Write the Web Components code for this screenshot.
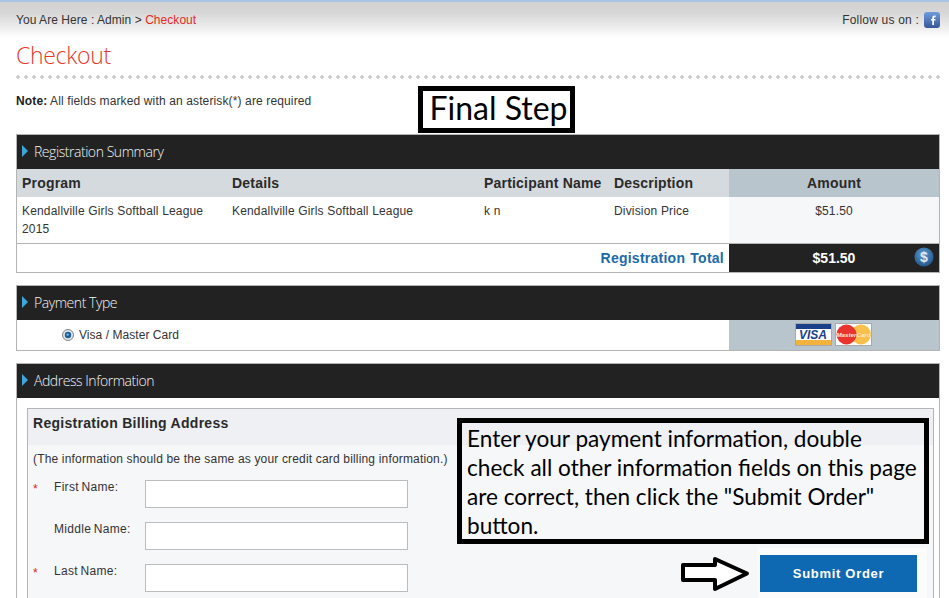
<!DOCTYPE html>
<html lang="en">
<head>
<meta charset="utf-8">
<title>Checkout</title>
<style>
  html, body { margin: 0; padding: 0; height: 598px; overflow: hidden; background: #fff; }
  body { font: 12px/18px "Liberation Sans", Arial, sans-serif; color: #333; }
</style>
</head>
<body>
<checkout-page>
  <crumb-bar></crumb-bar>
  <page-title>Checkout</page-title>
  <note-row></note-row>

  <section-panel heading="Registration Summary">
    <summary-table></summary-table>
  </section-panel>

  <section-panel heading="Payment Type">
    <payment-type></payment-type>
  </section-panel>

  <section-panel heading="Address Information">
    <billing-form></billing-form>
  </section-panel>

  <note-box style="left:418px;top:86px;width:157px;height:47px;font-size:32px;line-height:33px;text-align:center;padding-left:4px;background:#fff">Final Step</note-box>
  <note-box style="left:457px;top:418px;width:472px;height:126px;font-size:22.6px;line-height:29px;padding:1px 0 0 5px">Enter your payment information, double check all other information fields on this page are correct, then click the "Submit Order" button.</note-box>
  <hint-arrow></hint-arrow>
</checkout-page>

<script>
function define(name, html, init) {
  customElements.define(name, class extends HTMLElement {
    constructor() {
      super();
      this.attachShadow({ mode: "open" });
    }
    connectedCallback() {
      this.shadowRoot.innerHTML = html;
      if (init) init(this);
    }
  });
}

define("checkout-page", /* html */`
<style>
  :host { display: block; position: relative; height: 598px; overflow: hidden; }
</style>
<slot></slot>`);

define("crumb-bar", /* html */`
<style>
  :host {
    display: flex; justify-content: space-between; align-items: center;
    height: 35px; padding: 0 9px 0 16px;
    border-top: 2px solid #a9c5e3;
    background: linear-gradient(#d2d2d2 0, #d6d6d6 30%, #eee 75%, #fff 100%);
  }
  .crumb { margin-top: 1px; letter-spacing: .05px; }
  .here { color: #e8281e; }
  .follow { display: flex; align-items: center; gap: 5px; margin-top: 1px; letter-spacing: .2px; }
  svg { display: block; }
</style>
<span class="crumb">You Are Here : Admin &gt; <span class="here">Checkout</span></span>
<span class="follow">Follow us on :
  <svg width="16" height="16" viewBox="0 0 16 16">
    <defs><linearGradient id="fb" x1="0" y1="0" x2="0" y2="1"><stop offset="0" stop-color="#6f9bdc"/><stop offset="1" stop-color="#37579b"/></linearGradient></defs>
    <rect width="16" height="16" rx="3" fill="url(#fb)"/>
    <path d="M8.3 13V8.6H7V7h1.3V5.9C8.3 4.4 9.1 3.6 10.5 3.6h1.1v1.6h-.8c-.6 0-.8.3-.8.8V7h1.6l-.2 1.6h-1.4V13z" fill="#fff"/>
  </svg>
</span>`);

define("page-title", /* html */`
<style>
  :host {
    display: block; height: 42px; margin: 0 9px 0 16px;
    font: 300 23px/37px "Open Sans", sans-serif; color: #e8392c; letter-spacing: -.3px;
    background: radial-gradient(circle at 2px 2px, #cbcbcb 1.5px, transparent 2px) left bottom / 8px 4px repeat-x;
  }
</style>
<slot></slot>`);

define("note-row", /* html */`
<style>
  :host { display: block; height: 55px; padding-top: 13px; box-sizing: border-box; }
  div { padding-left: 16px; letter-spacing: .13px; }
  b { color: #222; }
</style>
<div><b>Note:</b> All fields marked with an asterisk(*) are required</div>`);

define("section-panel", /* html */`
<style>
  :host { display: block; margin: 0 9px 12px 16px; border: 1px solid #b4b4b4; }
  header {
    display: flex; align-items: center; gap: 6px; height: 34px; padding-left: 5px;
    background: #222; color: #f4f4f4;
    font: 300 14px/34px "Open Sans", sans-serif; letter-spacing: -.45px;
  }
  i { width: 0; height: 0; border-left: 6px solid #3fa6dc; border-top: 6px solid transparent; border-bottom: 6px solid transparent; margin-top: -2px; }
</style>
<header><i></i><span id="t"></span></header>
<slot></slot>`, (el) => {
  el.shadowRoot.getElementById("t").textContent = el.getAttribute("heading");
});

define("summary-table", /* html */`
<style>
  :host { display: block; }
  .row { display: grid; grid-template-columns: 210px 252px 130px 120px 1fr; }
  .head { height: 28px; background: #d5dade; font: bold 14px/28px "Liberation Sans", Arial, sans-serif; color: #2a2a2a; letter-spacing: .2px; }
  .head > div { padding-left: 5px; }
  .head > div:last-child { background: #b9c5cc; text-align: center; padding: 0; }
  .body { height: 46px; border-bottom: 1px solid #b4b4b4; letter-spacing: .17px; }
  .body > div { padding: 5px 5px 0; }
  .body > div:last-child { background: #f6f7f9; text-align: center; padding: 5px 0 0; }
  .total { display: grid; grid-template-columns: 712px 1fr; height: 28px; font: bold 14px/28px "Liberation Sans", Arial, sans-serif; }
  .label { text-align: right; padding-right: 5px; color: #1c6aa8; word-spacing: 1px; letter-spacing: .25px; }
  .sum { background: #222; color: #fff; text-align: center; position: relative; }
  svg { position: absolute; right: 5px; top: 3px; }
</style>
<div class="row head"><div>Program</div><div>Details</div><div>Participant Name</div><div>Description</div><div>Amount</div></div>
<div class="row body">
  <div>Kendallville Girls Softball League 2015</div>
  <div>Kendallville Girls Softball League</div>
  <div>k n</div>
  <div>Division Price</div>
  <div>$51.50</div>
</div>
<div class="total">
  <div class="label">Registration Total</div>
  <div class="sum">$51.50
    <svg width="20" height="20" viewBox="0 0 20 20">
      <defs><radialGradient id="d" cx=".45" cy=".35" r=".7"><stop offset="0" stop-color="#5b9bd1"/><stop offset="1" stop-color="#1f5288"/></radialGradient></defs>
      <circle cx="10" cy="10" r="9.5" fill="url(#d)"/>
      <text x="10" y="15" text-anchor="middle" font-family="Liberation Sans, sans-serif" font-size="14" font-weight="bold" fill="#dfe9f3">$</text>
    </svg>
  </div>
</div>`);

define("payment-type", /* html */`
<style>
  :host { display: grid; grid-template-columns: 712px 1fr; height: 30px; }
  .opt { display: flex; align-items: center; gap: 5px; padding: 0 0 0 45px; letter-spacing: .05px; }
  .cards { background: #b9c5cc; display: flex; align-items: flex-start; gap: 3px; padding: 3px 0 0 66px; }
  svg { display: block; }
</style>
<div class="opt">
  <svg width="12" height="12" viewBox="0 0 12 12">
    <circle cx="6" cy="6" r="5.5" fill="#e2e5e8" stroke="#7f868c"/>
    <circle cx="6" cy="6" r="3.2" fill="#1d5f97"/>
    <circle cx="5.6" cy="5.6" r="1.2" fill="#7fb6e0"/>
  </svg>
  Visa / Master Card
</div>
<div class="cards">
  <svg width="37" height="23" viewBox="0 0 37 23">
    <rect x=".5" y=".5" width="36" height="22" fill="#fff" stroke="#a9a9a9"/>
    <rect x="1" y="1" width="35" height="5" fill="#1a3f8b"/>
    <rect x="1" y="17" width="35" height="5" fill="#f2b33d"/>
    <text x="18" y="16" text-anchor="middle" font-family="Liberation Sans, sans-serif" font-size="12" font-weight="bold" font-style="italic" fill="#1a3f8b">VISA</text>
  </svg>
  <svg width="37" height="23" viewBox="0 0 37 23">
    <rect x=".5" y=".5" width="36" height="22" fill="#fff" stroke="#a9a9a9"/>
    <circle cx="26" cy="11.5" r="10" fill="#fbc04b"/>
    <circle cx="11.5" cy="11.5" r="10" fill="#e9332f"/>
    <text x="18.5" y="13.5" text-anchor="middle" font-family="Liberation Sans, sans-serif" font-size="6.2" font-weight="bold" font-style="italic" fill="#ffe6d2">MasterCard</text>
  </svg>
</div>`);

define("billing-form", /* html */`
<style>
  :host { display: block; padding: 10px 5px 0 10px; }
  .box { border: 1px solid #b4b4b4; background: #f6f7f9; height: 300px; position: relative; }
  h3 { margin: 0; height: 36px; padding-left: 5px; background: #eef0f3; font: bold 14px/28px "Liberation Sans", Arial, sans-serif; color: #2a2a2a; letter-spacing: .28px; }
  .info { padding: 5px 5px 0; height: 30px; letter-spacing: .17px; }
  .main { display: flex; justify-content: space-between; padding-left: 5px; }
  .fields { display: flex; flex-direction: column; gap: 14px; }
  .action { width: 169px; height: 60px; margin: 68px 6px 0 0; background: #fcfcfd; box-sizing: border-box; padding: 7px 0 0 2px; }
</style>
<div class="box">
  <h3>Registration Billing Address</h3>
  <div class="info">(The information should be the same as your credit card billing information.)</div>
  <div class="main">
    <div class="fields">
      <form-field label="First Name:" required></form-field>
      <form-field label="Middle Name:"></form-field>
      <form-field label="Last Name:" required></form-field>
    </div>
    <div class="action"><submit-button>Submit Order</submit-button></div>
  </div>
</div>`);

define("form-field", /* html */`
<style>
  :host { display: grid; grid-template-columns: 21px 91px 263px; color: #333; }
  .star { color: #d9241c; }
  .lbl { margin-top: -2px; word-spacing: -1px; letter-spacing: .3px; }
  .in { width: 263px; height: 28px; box-sizing: border-box; border: 1px solid #b9bdc0; background: #fff; }
</style>
<span class="star" id="s"></span>
<span class="lbl" id="l"></span>
<div class="in"></div>`, (el) => {
  el.shadowRoot.getElementById("l").textContent = el.getAttribute("label");
  el.shadowRoot.getElementById("s").textContent = el.hasAttribute("required") ? "*" : "";
});

define("submit-button", /* html */`
<style>
  :host {
    display: block; width: 157px; height: 37px;
    background: #0f68b2; color: #fff; text-align: center;
    font: bold 13px/37px "Liberation Sans", Arial, sans-serif; letter-spacing: .7px;
  }
</style>
<slot></slot>`);

define("note-box", /* html */`
<style>
  :host {
    display: block; position: absolute; box-sizing: border-box;
    border: 5px solid #000; color: #000;
    font-family: Lato, "Open Sans", sans-serif;
  }
</style>
<slot></slot>`);

define("hint-arrow", /* html */`
<style>
  :host { display: block; position: absolute; left: 681px; top: 556px; width: 70px; height: 36px; }
  svg { display: block; }
</style>
<svg width="70" height="36" viewBox="0 0 70 36">
  <path d="M2 9H34V3L66 17.5L34 33V24H2z" fill="#fff" stroke="#000" stroke-width="4" stroke-linejoin="round"/>
</svg>`);
</script>
</body>
</html>
